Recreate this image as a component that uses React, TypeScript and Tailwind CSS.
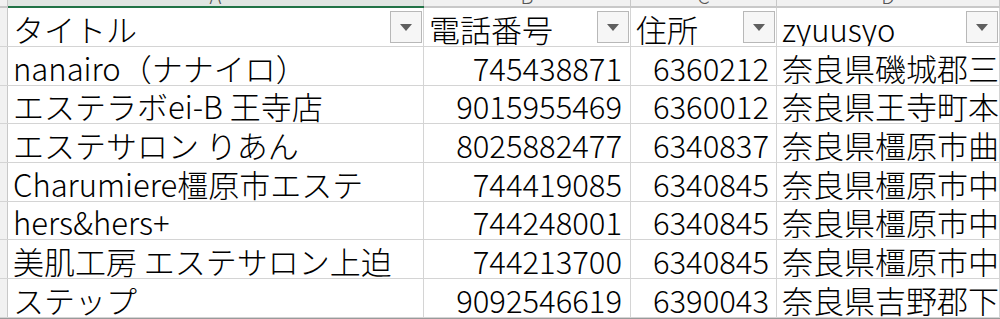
const font = { fontFamily: '"Noto Sans CJK JP", "Noto Sans", sans-serif' };

type Row = { title: string; tel: string; zip: string; addr: string };

const rows: Row[] = [
  { title: 'nanairo（ナナイロ）', tel: '745438871', zip: '6360212', addr: '奈良県磯城郡三宅町' },
  { title: 'エステラボei-B 王寺店', tel: '9015955469', zip: '6360012', addr: '奈良県王寺町本町' },
  { title: 'エステサロン りあん', tel: '8025882477', zip: '6340837', addr: '奈良県橿原市曲川町' },
  { title: 'Charumiere橿原市エステ', tel: '744419085', zip: '6340845', addr: '奈良県橿原市中曽司町' },
  { title: 'hers&hers+', tel: '744248001', zip: '6340845', addr: '奈良県橿原市中曽司町' },
  { title: '美肌工房 エステサロン上迫', tel: '744213700', zip: '6340845', addr: '奈良県橿原市中曽司町' },
  { title: 'ステップ', tel: '9092546619', zip: '6390043', addr: '奈良県吉野郡下市町' },
];

function FilterButton() {
  return (
    <div className="absolute right-[1px] top-[3px] w-[32px] h-[32px] border border-[#b8b8b8] bg-[#f6f6f6] flex items-center justify-center">
      <svg width="12" height="7" viewBox="0 0 12 7">
        <path d="M0 0h12L6 7z" fill="#5f5f5f" />
      </svg>
    </div>
  );
}

function HeaderCell({ label, w }: { label: string; w: string }) {
  return (
    <div className={`relative ${w} h-full border-r border-[#d4d4d4] flex items-end pl-[5px] pb-[2px] overflow-hidden`}>
      <span className="text-[31px] leading-none whitespace-nowrap text-black">{label}</span>
      <FilterButton />
    </div>
  );
}

function ColLetter({ letter, w, active }: { letter: string; w: string; active?: boolean }) {
  return (
    <div
      className={`${w} h-full border-r border-[#c8c8c8] flex justify-center overflow-hidden ${
        active ? 'bg-[#e0e6e2]' : 'bg-[#f1f1f1]'
      }`}
    >
      <span className="text-[20px] leading-none text-[#555] -mt-[14px]">{letter}</span>
    </div>
  );
}

export default function App() {
  return (
    <div className="w-[1000px] h-[319px] overflow-hidden bg-white font-light" style={font}>
      {/* column letters, mostly scrolled off */}
      <div className="flex h-[6px]">
        <div className="w-[8px] h-full bg-[#f1f1f1] border-r border-[#c8c8c8]" />
        <ColLetter letter="A" w="w-[416px]" active />
        <ColLetter letter="B" w="w-[207px]" />
        <ColLetter letter="C" w="w-[146px]" />
        <ColLetter letter="D" w="w-[223px]" />
      </div>
      <div className="flex h-[2px]">
        <div className="w-[8px] h-full bg-[#c8c8c8]" />
        <div className="w-[416px] h-full bg-[#217346]" />
        <div className="flex-1 h-full bg-[#c8c8c8]" />
      </div>

      {/* header row */}
      <div className="flex h-[39px] border-b border-[#d4d4d4]">
        <div className="w-[8px] h-full bg-[#f1f1f1] border-r border-[#c8c8c8]" />
        <HeaderCell label="タイトル" w="w-[416px]" />
        <HeaderCell label="電話番号" w="w-[207px]" />
        <HeaderCell label="住所" w="w-[146px]" />
        <HeaderCell label="zyuusyo" w="w-[223px]" />
      </div>

      {rows.map((r, i) => (
        <div key={i} className="flex h-[38.67px] border-b border-[#d4d4d4] text-[31px] leading-none text-black">
          <div className="w-[8px] h-full bg-[#f1f1f1] border-r border-[#c8c8c8]" />
          <div className="w-[416px] h-full border-r border-[#d4d4d4] flex items-end pl-[5px] pb-[2px] overflow-hidden whitespace-nowrap">
            {r.title}
          </div>
          <div className="w-[207px] h-full border-r border-[#d4d4d4] flex items-end justify-end pr-[8px] pb-[2px]">
            {r.tel}
          </div>
          <div className="w-[146px] h-full border-r border-[#d4d4d4] flex items-end justify-end pr-[7px] pb-[2px]">
            {r.zip}
          </div>
          <div className="w-[223px] h-full border-r border-[#d4d4d4] flex items-end pl-[5px] pb-[2px] overflow-hidden whitespace-nowrap">
            {r.addr}
          </div>
        </div>
      ))}
      <div className="h-[2px] bg-[#9a9a9a]" />
    </div>
  );
}
